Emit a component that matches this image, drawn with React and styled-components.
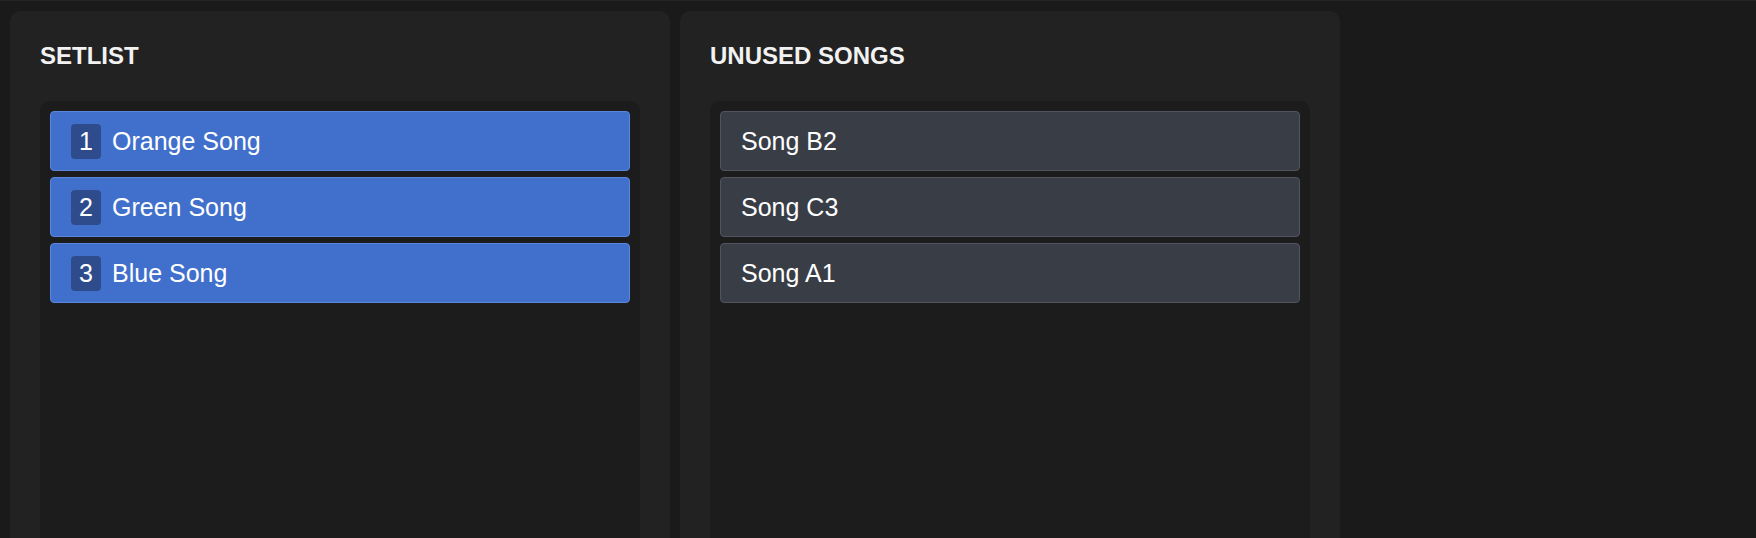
import React from "react";
import styled, { createGlobalStyle } from "styled-components";

const GlobalStyle = createGlobalStyle`
  html, body {
    margin: 0;
    padding: 0;
    background: #1a1a1a;
    overflow: hidden;
  }
  body {
    font-family: "Liberation Sans", Arial, sans-serif;
    color: #fff;
  }
`;

const Page = styled.div`
  border-top: 1px solid #242424;
  padding: 10px 10px 0;
  display: flex;
  gap: 10px;
  height: 700px;
  box-sizing: border-box;
`;

const Panel = styled.section`
  width: 660px;
  box-sizing: border-box;
  background: #222222;
  border-radius: 10px;
  padding: 30px 30px 0;
  display: flex;
  flex-direction: column;
  gap: 30px;
`;

const Heading = styled.h2`
  margin: 0;
  font-size: 24px;
  line-height: 30px;
  font-weight: 700;
  color: #f2f2f2;
`;

const List = styled.div`
  flex: 1;
  background: #1c1c1c;
  border-radius: 10px;
  padding: 10px;
  display: flex;
  flex-direction: column;
  gap: 6px;
`;

const Row = styled.div`
  height: 60px;
  box-sizing: border-box;
  display: flex;
  align-items: center;
  gap: 11px;
  padding: 0 20px;
  border-radius: 4px;
  border: 1px solid ${({ $active }) => ($active ? "#5a86dc" : "#50545c")};
  background: ${({ $active }) => ($active ? "#4170cc" : "#393d46")};
  font-size: 25px;
  color: #fff;
`;

const Badge = styled.span`
  height: 35px;
  min-width: 30px;
  box-sizing: border-box;
  padding: 0 8px;
  display: inline-flex;
  align-items: center;
  justify-content: center;
  border-radius: 4px;
  background: #2e4c8c;
  font-size: 25px;
`;

const setlist = ["Orange Song", "Green Song", "Blue Song"];
const unused = ["Song B2", "Song C3", "Song A1"];

export default function App() {
  return (
    <>
      <GlobalStyle />
      <Page>
        <Panel>
          <Heading>SETLIST</Heading>
          <List>
            {setlist.map((song, i) => (
              <Row key={song} $active>
                <Badge>{i + 1}</Badge>
                {song}
              </Row>
            ))}
          </List>
        </Panel>
        <Panel>
          <Heading>UNUSED SONGS</Heading>
          <List>
            {unused.map((song) => (
              <Row key={song}>{song}</Row>
            ))}
          </List>
        </Panel>
      </Page>
    </>
  );
}
